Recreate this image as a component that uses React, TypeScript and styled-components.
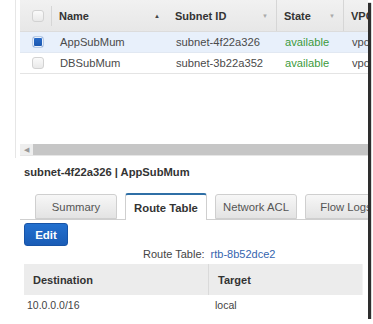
import styled, { createGlobalStyle, css } from "styled-components";

const GlobalStyle = createGlobalStyle`
  html, body {
    margin: 0;
    padding: 0;
    background: #ffffff;
    font-family: "Liberation Sans", Arial, sans-serif;
  }
`;

const Frame = styled.div`
  width: 368px;
  height: 319px;
  background: #fff;
  box-shadow: 3px 3px 1px #2e2e2e;
  overflow: hidden;
  display: flex;
  flex-direction: column;
  box-sizing: border-box;
`;

const GridPanel = styled.div`
  margin-left: 15px;
  border-left: 1px solid #e6e6e6;
  padding-left: 4px;
  height: 158px;
  flex-shrink: 0;
  display: flex;
  flex-direction: column;
`;

const columns = css`
  display: grid;
  grid-template-columns: 32px 116px 109px 67px 1fr;
  align-items: center;
`;

const HeaderRow = styled.div`
  ${columns};
  height: 32px;
  background: linear-gradient(#f1f1f1, #e7e7e7);
  border-bottom: 1px solid #dcdcdc;
  box-sizing: border-box;
`;

const HeaderCell = styled.div<{ $divider?: boolean }>`
  height: 100%;
  display: flex;
  align-items: center;
  padding-left: 7px;
  padding-right: 8px;
  font-size: 11px;
  font-weight: bold;
  color: #333;
  white-space: nowrap;
  border-right: ${(p) => (p.$divider ? "1px solid #d6d6d6" : "none")};
  box-sizing: border-box;
  & > span {
    flex: 1;
  }
`;

const SortArrow = styled.i<{ $active?: boolean }>`
  font-style: normal;
  font-size: 6px;
  color: ${(p) => (p.$active ? "#444" : "#aaa")};
`;

const CheckCell = styled.div`
  height: 100%;
  display: flex;
  align-items: center;
  justify-content: center;
  padding-left: 4px;
`;

const HeaderCheckCell = styled(CheckCell)`
  border-right: 1px solid #d6d6d6;
  height: 20px;
`;

const Check = styled.span<{ $checked?: boolean }>`
  display: block;
  width: 12px;
  height: 12px;
  border-radius: 3px;
  box-sizing: border-box;
  border: 1px solid ${(p) => (p.$checked ? "#b8cbe6" : "#d2d2d2")};
  background: ${(p) =>
    p.$checked
      ? "linear-gradient(#2a6dcb, #1a56ad)"
      : "linear-gradient(#fafafa, #e9e9e9)"};
  ${(p) => p.$checked && "box-shadow: inset 0 0 0 1px #e9f0fa;"}
`;

const DataRow = styled.div<{ $selected?: boolean }>`
  ${columns};
  height: 21px;
  background: ${(p) => (p.$selected ? "#e8f0fb" : "#fff")};
  border-bottom: 1px solid ${(p) => (p.$selected ? "#e1e8f2" : "#e4e4e4")};
  box-sizing: border-box;
`;

const DataCell = styled.div<{ $tone?: "green" }>`
  padding-left: 8px;
  font-size: 11.2px;
  color: ${(p) => (p.$tone === "green" ? "#3c9a3c" : "#4a4a4a")};
  white-space: nowrap;
  overflow: hidden;
`;

const Filler = styled.div`
  flex: 1;
`;

const ScrollBar = styled.div`
  height: 11px;
  display: flex;
  border-bottom: 1px solid #e6e6e6;
  margin-bottom: 2px;
`;

const ScrollArrow = styled.div`
  width: 13px;
  background: #eeeeee;
  color: #999;
  font-size: 7px;
  display: flex;
  align-items: center;
  justify-content: center;
`;

const ScrollThumb = styled.div`
  flex: 1;
  background: #c6c6c6;
`;

const Detail = styled.div`
  padding-left: 20px;
  display: flex;
  flex-direction: column;
`;

const Title = styled.h2`
  margin: 7px 0 0 4px;
  font-size: 11.2px;
  font-weight: bold;
  color: #333;
  line-height: 14px;
`;

const TabBar = styled.div`
  margin-top: 14px;
  display: flex;
  gap: 8px;
  padding-left: 15px;
  height: 26px;
  border-bottom: 1px solid #cfcfcf;
`;

const Tab = styled.div<{ $active?: boolean }>`
  width: 82px;
  flex-shrink: 0;
  box-sizing: border-box;
  display: flex;
  align-items: center;
  justify-content: center;
  font-size: 11.3px;
  color: ${(p) => (p.$active ? "#333" : "#555")};
  font-weight: ${(p) => (p.$active ? "bold" : "normal")};
  border: 1px solid #cfcfcf;
  border-radius: 3px 3px 0 0;
  background: ${(p) =>
    p.$active ? "#fff" : "linear-gradient(#f7f7f7, #e3e3e3)"};
  ${(p) =>
    p.$active
      ? css`
          border-top: 2px solid #2f6fa6;
          border-bottom: none;
          height: 27px;
          position: relative;
          z-index: 1;
        `
      : css`
          margin-top: 1px;
        `}
`;

const EditButton = styled.button`
  margin: 3px 0 0 4px;
  width: 44px;
  height: 23px;
  border: 1px solid #1753a6;
  border-radius: 3px;
  background: linear-gradient(#2370cf, #1a5cb6);
  color: #fff;
  font-family: inherit;
  font-size: 11.5px;
  font-weight: bold;
  padding: 0;
`;

const RouteLine = styled.div`
  margin-top: 2px;
  display: flex;
  gap: 6px;
  padding-left: 123px;
  font-size: 11px;
  line-height: 13px;
`;

const RouteLabel = styled.span`
  color: #444;
`;

const RouteLink = styled.a`
  color: #3564ae;
  text-decoration: none;
`;

const RoutesTable = styled.div`
  margin: 3px 0 0 4px;
  width: 339px;
  display: grid;
  grid-template-columns: 185px 1fr;
`;

const RoutesHead = styled.div<{ $divider?: boolean }>`
  height: 31px;
  background: #ececec;
  display: flex;
  align-items: center;
  padding-left: 9px;
  font-size: 11px;
  font-weight: bold;
  color: #333;
  border-right: 1px solid ${(p) => (p.$divider ? "#dadada" : "#f4f4f4")};
`;

const RoutesCell = styled.div`
  height: 19px;
  display: flex;
  align-items: center;
  padding-left: 3px;
  font-size: 10.5px;
  color: #444;
  & + & {
    padding-left: 6px;
  }
`;

export default function App() {
  return (
    <>
      <GlobalStyle />
      <Frame>
        <GridPanel>
          <HeaderRow>
            <HeaderCheckCell>
              <Check />
            </HeaderCheckCell>
            <HeaderCell>
              <span>Name</span>
              <SortArrow $active>▲</SortArrow>
            </HeaderCell>
            <HeaderCell $divider>
              <span>Subnet ID</span>
              <SortArrow>▼</SortArrow>
            </HeaderCell>
            <HeaderCell $divider>
              <span>State</span>
              <SortArrow>▼</SortArrow>
            </HeaderCell>
            <HeaderCell>
              <span>VPC ID</span>
            </HeaderCell>
          </HeaderRow>
          <DataRow $selected>
            <CheckCell>
              <Check $checked />
            </CheckCell>
            <DataCell>AppSubMum</DataCell>
            <DataCell>subnet-4f22a326</DataCell>
            <DataCell $tone="green">available</DataCell>
            <DataCell>vpc-2b7f4e4e</DataCell>
          </DataRow>
          <DataRow>
            <CheckCell>
              <Check />
            </CheckCell>
            <DataCell>DBSubMum</DataCell>
            <DataCell>subnet-3b22a352</DataCell>
            <DataCell $tone="green">available</DataCell>
            <DataCell>vpc-2b7f4e4e</DataCell>
          </DataRow>
          <Filler />
          <ScrollBar>
            <ScrollArrow>◀</ScrollArrow>
            <ScrollThumb />
          </ScrollBar>
        </GridPanel>
        <Detail>
          <Title>subnet-4f22a326 | AppSubMum</Title>
          <TabBar>
            <Tab>Summary</Tab>
            <Tab $active>Route Table</Tab>
            <Tab>Network ACL</Tab>
            <Tab>Flow Logs</Tab>
          </TabBar>
          <EditButton>Edit</EditButton>
          <RouteLine>
            <RouteLabel>Route Table:</RouteLabel>
            <RouteLink href="#">rtb-8b52dce2</RouteLink>
          </RouteLine>
          <RoutesTable>
            <RoutesHead $divider>Destination</RoutesHead>
            <RoutesHead>Target</RoutesHead>
            <RoutesCell>10.0.0.0/16</RoutesCell>
            <RoutesCell>local</RoutesCell>
          </RoutesTable>
        </Detail>
      </Frame>
    </>
  );
}
